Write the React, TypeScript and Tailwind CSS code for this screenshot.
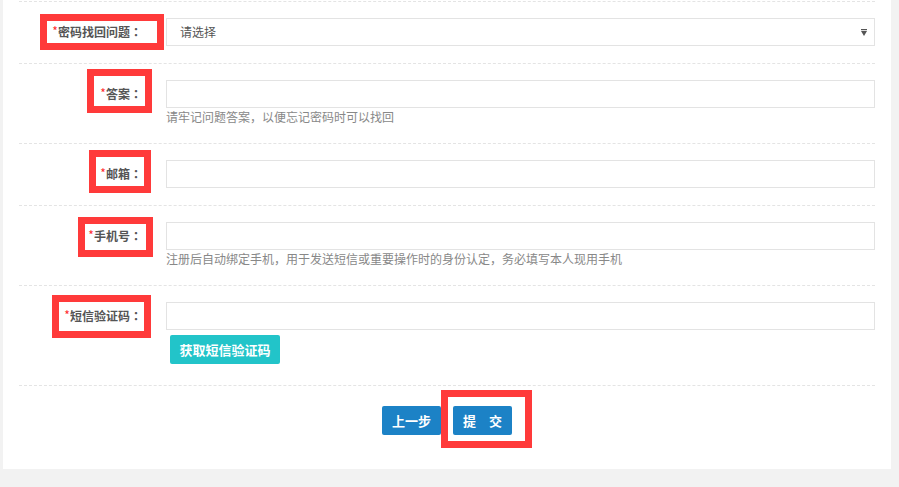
import React from "react";

const font = { fontFamily: '"Noto Sans CJK SC", "Noto Sans", sans-serif' };

function Label({ text }: { text: string }) {
  return (
    <div className="w-[147px] shrink-0 h-[28px] flex items-center justify-end pr-[24px] text-[12px] font-bold text-[#555]">
      <span className="text-[#ff2b2b] font-normal text-[12px] relative top-[-1px]">*</span>
      <span>{text}</span>
      <span style={{ fontFamily: '"Noto Sans CJK JP", "Noto Sans CJK SC", sans-serif' }}>：</span>
    </div>
  );
}

function RedBox({ cls }: { cls: string }) {
  return <div className={"absolute border-[7px] border-[#ff3a3a] pointer-events-none " + cls} />;
}

function Help({ text }: { text: string }) {
  return <div className="h-[18px] leading-[18px] text-[12px] text-[#888]">{text}</div>;
}

function Input() {
  return <div className="h-[28px] border border-[#e3e3e3] bg-white" />;
}

export default function App() {
  return (
    <div className="w-[899px] h-[487px] bg-[#f2f2f2] pl-[3px]" style={font}>
      <div className="w-[888px] h-[469px] bg-white px-[16px] pt-[1px]">
        <div className="border-t border-dashed border-[#e4e4e4]" />

        {/* Row 1 */}
        <div className="relative flex pt-[16px] pb-[17px] border-b border-dashed border-[#e4e4e4]">
          <Label text="密码找回问题" />
          <div className="flex-1">
            <div className="h-[28px] border border-[#e3e3e3] bg-white flex items-center justify-between pl-[13px] pr-[7px] text-[12px] text-[#555]">
              <span>请选择</span>
              <svg width="6" height="7" viewBox="0 0 6 7">
                <rect x="0" y="0" width="6" height="1.2" fill="#555" />
                <path d="M0 2 L6 2 L3 7 Z" fill="#555" />
              </svg>
            </div>
          </div>
          <RedBox cls="left-[21px] top-[12px] w-[124px] h-[36px]" />
        </div>

        {/* Row 2 */}
        <div className="relative flex pt-[16px] pb-[17px] border-b border-dashed border-[#e4e4e4]">
          <Label text="答案" />
          <div className="flex-1">
            <Input />
            <Help text="请牢记问题答案，以便忘记密码时可以找回" />
          </div>
          <RedBox cls="left-[68px] top-[5px] w-[65px] h-[44px]" />
        </div>

        {/* Row 3 */}
        <div className="relative flex pt-[16px] pb-[17px] border-b border-dashed border-[#e4e4e4]">
          <Label text="邮箱" />
          <div className="flex-1">
            <Input />
          </div>
          <RedBox cls="left-[70px] top-[6px] w-[62px] h-[43px]" />
        </div>

        {/* Row 4 */}
        <div className="relative flex pt-[16px] pb-[17px] border-b border-dashed border-[#e4e4e4]">
          <Label text="手机号" />
          <div className="flex-1">
            <Input />
            <Help text="注册后自动绑定手机，用于发送短信或重要操作时的身份认定，务必填写本人现用手机" />
          </div>
          <RedBox cls="left-[59px] top-[11px] w-[75px] h-[40px]" />
        </div>

        {/* Row 5 */}
        <div className="relative flex pt-[16px] pb-[21px] border-b border-dashed border-[#e4e4e4]">
          <Label text="短信验证码" />
          <div className="flex-1">
            <Input />
            <div className="mt-[5px] pl-[4px]">
              <button className="h-[29px] w-[110px] rounded-[2px] bg-[#22c4c9] text-white text-[13px] font-bold">
                获取短信验证码
              </button>
            </div>
          </div>
          <RedBox cls="left-[33px] top-[9px] w-[99px] h-[43px]" />
        </div>

        {/* Buttons */}
        <div className="relative flex justify-center pt-[20px] gap-[12px]">
          <button className="h-[29px] w-[59px] rounded-[2px] bg-[#1c82c6] text-white text-[13px] font-bold">
            上一步
          </button>
          <button className="h-[29px] w-[59px] rounded-[2px] bg-[#1c82c6] text-white text-[13px] font-bold">
            提　交
          </button>
          <RedBox cls="left-[422px] top-[4px] w-[91px] h-[58px]" />
        </div>
      </div>
    </div>
  );
}
